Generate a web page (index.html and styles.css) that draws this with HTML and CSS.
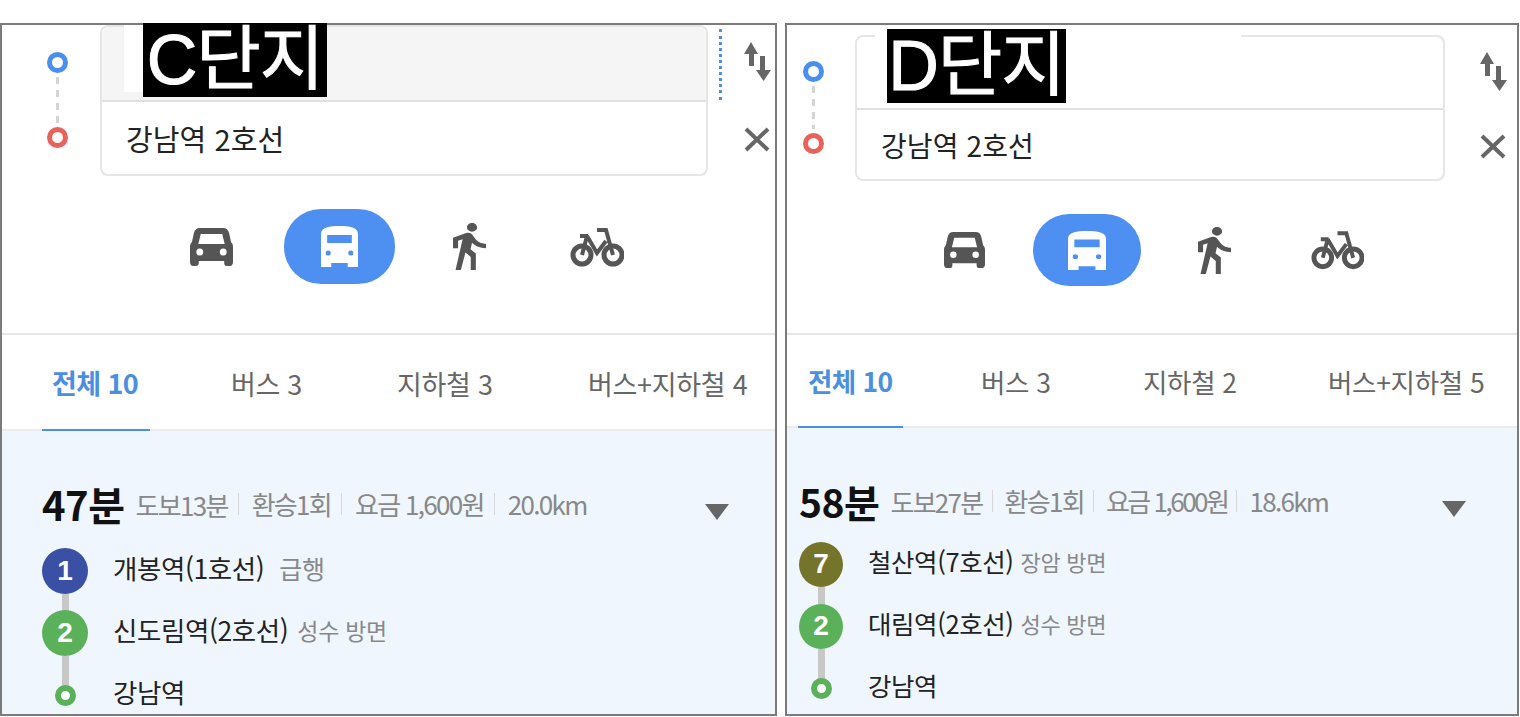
FILE: index.html
```html
<!DOCTYPE html>
<html lang="ko">
<head>
  <meta charset="UTF-8" />
  <meta name="viewport" content="width=device-width, initial-scale=1.0" />
  <title>길찾기 비교</title>
  <link rel="stylesheet" href="styles.css">
</head>
<body>
  <svg class="sprites" aria-hidden="true">
    <symbol id="icon-car" viewBox="0 0 44 38" preserveAspectRatio="none">
      <path fill-rule="evenodd" d="M10 0h24c3 0 5 1.500 6 5l2 9c1.500 1.500 2 3 2 5v15c0 2-1 4-3 4h-3c-2 0-3-1-3-3v-2H9v2c0 2-1 3-3 3H3c-2 0-3-2-3-4V19c0-2 .5-3.500 2-5l2-9C5 1.500 7 0 10 0zM11 6L8.500 16h27L33 6zM10 20.500a3.500 3.500 0 1 0 0 7 3.500 3.500 0 0 0 0-7zM34 20.500a3.500 3.500 0 1 0 0 7 3.500 3.500 0 0 0 0-7z"/>
    </symbol>
    <symbol id="icon-bus" viewBox="0 0 36 41" preserveAspectRatio="none">
      <path fill-rule="evenodd" d="M18 0c10 0 18 1.500 18 8v33H26v-4H10v4H0V8C0 1.500 8 0 18 0zM6 9v8h24V9zM7 24.500a2.500 2.500 0 1 0 0 5 2.500 2.500 0 0 0 0-5zM29 24.500a2.500 2.500 0 1 0 0 5 2.500 2.500 0 0 0 0-5z"/>
    </symbol>
    <symbol id="icon-walk" viewBox="6 1.500 13 21.500" preserveAspectRatio="none">
      <path d="M13.500 5.500c1.100 0 2-.9 2-2s-.9-2-2-2-2 .9-2 2 .9 2 2 2zM9.800 8.900L7 23h2.100l1.800-8 2.100 2v6h2v-7.500l-2.100-2 .6-3C14.800 12 16.800 13 19 13v-2c-1.900 0-3.500-1-4.300-2.400l-1-1.600c-.4-.6-1-1-1.700-1-.3 0-.5.100-.8.100L6 8.300V13h2V9.600l1.800-.7z"/>
    </symbol>
    <symbol id="icon-bike" viewBox="0 0 54 40">
      <g fill="none" stroke="#555" stroke-width="5">
        <circle cx="12" cy="28" r="9"/>
        <circle cx="43" cy="28" r="9"/>
        <path stroke-width="4" d="M27 3h9l7 25M10 9h8M17 9l-5 19M17 9l10 17 9-12"/>
      </g>
    </symbol>
    <symbol id="icon-swap" viewBox="0 0 28 39" preserveAspectRatio="none">
      <path d="M7 0l7 12H10v12H5V12H0zM16 14h5v14h6l-7.500 11L12 28h4z"/>
    </symbol>
    <symbol id="icon-close" viewBox="0 0 26 25" preserveAspectRatio="none">
      <path d="M2 2l22 21M24 2L2 23" fill="none" stroke="#666" stroke-width="4"/>
    </symbol>
  </svg>

  <main class="compare">
    <section class="panel panel-c">
      <div class="top">
        <div class="form">
          <div class="markers">
            <span class="dot dot-start"></span>
            <span class="dash"></span>
            <span class="dot dot-end"></span>
          </div>
          <div class="box">
            <div class="field field-active"></div>
            <div class="field">강남역 2호선</div>
            <span class="patch"></span>
            <span class="cover">C단지</span>
          </div>
          <span class="focus-line"></span>
          <div class="actions">
            <svg class="icon-swap"><use href="#icon-swap"/></svg>
            <svg class="icon-close"><use href="#icon-close"/></svg>
          </div>
        </div>
        <div class="modes">
          <div class="mode"><svg class="icon-car"><use href="#icon-car"/></svg></div>
          <div class="mode mode-active"><svg class="icon-bus"><use href="#icon-bus"/></svg></div>
          <div class="mode"><svg class="icon-walk"><use href="#icon-walk"/></svg></div>
          <div class="mode mode-bike"><svg class="icon-bike"><use href="#icon-bike"/></svg></div>
        </div>
      </div>
      <nav class="tabs">
        <a class="tab tab-active">전체 10</a>
        <a class="tab">버스 3</a>
        <a class="tab">지하철 3</a>
        <a class="tab">버스+지하철 4</a>
      </nav>
      <div class="results">
        <div class="summary">
          <strong class="time">47분</strong>
          <span class="meta">도보13분</span>
          <span class="meta">환승1회</span>
          <span class="meta">요금 1,600원</span>
          <span class="meta">20.0km</span>
          <span class="caret"></span>
        </div>
        <ul class="steps">
          <li class="step">
            <span class="badge line-1">1</span>
            <span class="name">개봉역(1호선)</span>
            <span class="sub sub-wide">급행</span>
          </li>
          <li class="step">
            <span class="badge line-2">2</span>
            <span class="name">신도림역(2호선)</span>
            <span class="sub">성수 방면</span>
          </li>
          <li class="step">
            <span class="badge-end"><span class="end-dot"></span></span>
            <span class="name">강남역</span>
          </li>
        </ul>
      </div>
    </section>

    <section class="panel panel-d">
      <div class="top">
        <div class="form">
          <div class="markers">
            <span class="dot dot-start"></span>
            <span class="dash"></span>
            <span class="dot dot-end"></span>
          </div>
          <div class="box">
            <div class="field"></div>
            <div class="field">강남역 2호선</div>
            <span class="patch"></span>
            <span class="cover">D단지</span>
          </div>
          <div class="actions">
            <svg class="icon-swap"><use href="#icon-swap"/></svg>
            <svg class="icon-close"><use href="#icon-close"/></svg>
          </div>
        </div>
        <div class="modes">
          <div class="mode"><svg class="icon-car"><use href="#icon-car"/></svg></div>
          <div class="mode mode-active"><svg class="icon-bus"><use href="#icon-bus"/></svg></div>
          <div class="mode"><svg class="icon-walk"><use href="#icon-walk"/></svg></div>
          <div class="mode mode-bike"><svg class="icon-bike"><use href="#icon-bike"/></svg></div>
        </div>
      </div>
      <nav class="tabs">
        <a class="tab tab-active">전체 10</a>
        <a class="tab">버스 3</a>
        <a class="tab">지하철 2</a>
        <a class="tab">버스+지하철 5</a>
      </nav>
      <div class="results">
        <div class="summary">
          <strong class="time">58분</strong>
          <span class="meta">도보27분</span>
          <span class="meta">환승1회</span>
          <span class="meta meta-fare">요금 1,600원</span>
          <span class="meta">18.6km</span>
          <span class="caret"></span>
        </div>
        <ul class="steps">
          <li class="step">
            <span class="badge line-7">7</span>
            <span class="name">철산역(7호선)</span>
            <span class="sub">장암 방면</span>
          </li>
          <li class="step">
            <span class="badge line-2">2</span>
            <span class="name">대림역(2호선)</span>
            <span class="sub">성수 방면</span>
          </li>
          <li class="step">
            <span class="badge-end"><span class="end-dot"></span></span>
            <span class="name">강남역</span>
          </li>
        </ul>
      </div>
    </section>
  </main>
</body>
</html>
```

FILE: styles.css
```css
body {
  margin: 0;
  background-color: #fff;
  color: #222;
  font-family: "Noto Sans CJK KR", "Noto Sans", sans-serif;
  overflow: hidden;
}

.sprites {
  display: none;
}

.compare {
  display: flex;
  gap: 8px;
  padding-top: 23px;
}

.panel {
  position: relative;
  z-index: 0;
  box-sizing: border-box;
  height: 693px;
  border: 2px solid #7b7b7b;
  display: flex;
  flex-direction: column;
}

.panel-c {
  width: 777px;
}

.panel-d {
  width: 734px;
}

/* search form + travel modes */
.top {
  flex: none;
  height: 308px;
  border-bottom: 2px solid #e6e6e6;
}

.form {
  display: flex;
  align-items: flex-start;
}

.panel-c .form {
  padding-left: 44px;
}

.panel-d .form {
  padding: 10px 0 0 15px;
}

.markers {
  width: 22px;
  margin-right: 32px;
  display: flex;
  flex-direction: column;
  align-items: center;
  padding-top: 27px;
}

.panel-d .markers {
  margin-right: 31px;
  padding-top: 26px;
}

.dot {
  box-sizing: border-box;
  width: 21px;
  height: 21px;
  border: 5px solid #4a8ff0;
  border-radius: 50%;
}

.dot-end {
  border-color: #e8625c;
}

.dash {
  width: 3px;
  height: 46px;
  margin: 4px 0;
  background: repeating-linear-gradient(#d4d4d4 0 7px, transparent 7px 13px);
}

.panel-d .dash {
  height: 43px;
}

.box {
  position: relative;
  box-sizing: border-box;
  display: flex;
  flex-direction: column;
  border: 2px solid #e6e6e6;
  border-radius: 8px;
  background-color: #fff;
}

.panel-c .box {
  width: 608px;
  height: 151px;
}

.panel-d .box {
  width: 590px;
  height: 146px;
}

.field {
  box-sizing: border-box;
  flex: 1;
  display: flex;
  align-items: center;
  padding-left: 24px;
  font-size: 29px;
  letter-spacing: 0.1px;
  color: #222;
}

.panel-d .field {
  font-size: 28px;
}

.field:first-child {
  flex: none;
}

.panel-c .field:first-child {
  height: 73px;
}

.panel-d .field:first-child {
  height: 71px;
}

.field + .field {
  border-top: 2px solid #e0e0e0;
}

.field-active {
  background-color: #f5f5f5;
  border-radius: 6px 6px 0 0;
}

.patch {
  position: absolute;
  background-color: #fff;
}

.panel-c .patch {
  top: -2px;
  left: 22px;
  width: 19px;
  height: 67px;
}

.panel-d .patch {
  top: -4px;
  left: 18px;
  width: 366px;
  height: 6px;
}

.cover {
  position: absolute;
  display: flex;
  align-items: center;
  justify-content: center;
  height: 74px;
  background-color: #000;
  color: #fff;
  font-family: "Liberation Sans", "Noto Sans CJK KR", sans-serif;
  font-size: 70px;
  line-height: 1;
  letter-spacing: -1px;
  -webkit-text-stroke: 1px #fff;
}

.panel-c .cover {
  top: -4px;
  left: 41px;
  width: 184px;
}

.panel-d .cover {
  top: -8px;
  left: 30px;
  width: 179px;
}

.focus-line {
  width: 0;
  height: 71px;
  margin: 4px 0 0 11px;
  border-left: 3px dotted #4a8ff0;
}

.actions {
  display: flex;
  flex-direction: column;
  fill: #666;
}

.panel-c .actions {
  margin-left: 22px;
  padding-top: 17px;
}

.panel-d .actions {
  margin-left: 35px;
  padding-top: 17px;
}

.actions svg {
  display: block;
}

.icon-swap {
  width: 28px;
  height: 39px;
}

.icon-close {
  width: 26px;
  height: 25px;
  margin-top: 46px;
}

.panel-d .icon-close {
  margin-top: 43px;
}

.modes {
  display: flex;
  align-items: center;
  fill: #555;
}

.panel-c .modes {
  padding: 33px 0 0 145px;
}

.panel-d .modes {
  padding: 33px 0 0 115px;
}

.mode {
  display: flex;
  align-items: center;
  justify-content: center;
  width: 129px;
}

.panel-d .mode {
  width: 125px;
}

.mode svg {
  display: block;
}

.mode-bike {
  margin-left: -2px;
}

.mode-active {
  position: relative;
  z-index: 0;
  height: 75px;
  fill: #fff;
  margin-left: -1px;
  margin-right: 1px;
}

.panel-d .mode-active {
  height: 72px;
  margin-left: -3px;
  margin-right: 3px;
}

.mode-active::before {
  content: "";
  position: absolute;
  z-index: -1;
  top: 0;
  bottom: 0;
  left: 9px;
  right: 9px;
  border-radius: 37px;
  background-color: #4d90f2;
}

.panel-d .mode-active::before {
  left: 9px;
  right: 8px;
}

.icon-car {
  width: 43px;
  height: 38px;
}

.icon-bus {
  width: 37px;
  height: 41px;
}

.icon-walk {
  width: 33px;
  height: 47px;
}

.icon-bike {
  width: 54px;
  height: 40px;
}

.panel-d .icon-car {
  width: 41px;
  height: 36px;
}

.panel-d .icon-bus {
  width: 38px;
  height: 39px;
}

.panel-d .icon-bike {
  width: 53px;
}

/* tabs */
.tabs {
  flex: none;
  display: grid;
  justify-items: start;
  box-sizing: border-box;
  height: 96px;
  border-bottom: 2px solid #ececec;
  font-size: 27px;
  letter-spacing: -0.3px;
  color: #666;
}

.panel-c .tabs {
  grid-template-columns: 179px 166px 191px auto;
  padding-left: 40px;
}

.panel-d .tabs {
  grid-template-columns: 173px 162px 185px auto;
  padding-left: 11px;
  height: 93px;
  font-size: 26.500px;
}

.tab {
  display: flex;
  align-items: center;
  box-sizing: border-box;
  height: 96px;
  padding: 0 10px;
  white-space: nowrap;
}

.panel-d .tab {
  height: 93px;
}

.tab-active {
  color: #4a8fe0;
  font-weight: 700;
  letter-spacing: -0.6px;
  border-bottom: 2px solid #4a8fe0;
}

.panel-c .tab-active {
  width: 108px;
}

.panel-d .tab-active {
  width: 105px;
}

/* route results */
.results {
  position: relative;
  z-index: 0;
  flex: 1;
  min-height: 0;
  background-color: #eff6fd;
}

.panel-c .results {
  padding: 53px 0 0 40px;
}

.panel-d .results {
  padding: 53px 0 0 12px;
}

.summary {
  display: flex;
  align-items: center;
  height: 40px;
}

.time {
  font-size: 40px;
  font-weight: 700;
  color: #111;
  letter-spacing: -0.5px;
  margin-right: 11px;
}

.panel-d .time {
  font-size: 39px;
}

.meta {
  font-size: 26px;
  letter-spacing: -1.700px;
  color: #888;
  white-space: nowrap;
}

.meta-fare {
  letter-spacing: -2.500px;
}

.meta + .meta {
  margin-left: 10px;
  padding-left: 13px;
  border-left: 1px solid #d8d8d8;
  line-height: 22px;
}

.panel-d .meta + .meta {
  margin-left: 9px;
  padding-left: 12px;
}

.caret {
  width: 0;
  height: 0;
  margin-left: auto;
  border-style: solid;
  border-width: 16px 12.500px 0;
  border-color: #666 transparent transparent;
  position: relative;
  top: 8px;
}

.panel-c .caret {
  margin-right: 46px;
}

.panel-d .caret {
  margin-right: 51px;
}

.steps {
  list-style: none;
  margin: 16px 0 0;
  padding: 0;
}

.panel-d .steps {
  margin-top: 12px;
}

.step {
  display: flex;
  align-items: center;
  height: 62px;
}

.badge,
.badge-end {
  position: relative;
  flex: none;
  width: 46px;
  height: 46px;
  margin-right: 25px;
  display: flex;
  align-items: center;
  justify-content: center;
  border-radius: 50%;
  color: #fff;
  font-family: "Liberation Sans", sans-serif;
  font-size: 28px;
  font-weight: 700;
}

.panel-d .badge,
.panel-d .badge-end {
  width: 44px;
  height: 45px;
}

.badge::after {
  content: "";
  position: absolute;
  z-index: -1;
  top: 100%;
  left: 50%;
  width: 7px;
  height: 34px;
  margin-left: -3px;
  background-color: #c8c8c8;
}

.line-1 {
  background-color: #3a50a5;
}

.line-2 {
  background-color: #5bb05a;
}

.line-7 {
  background-color: #74752b;
}

.end-dot {
  position: relative;
  box-sizing: border-box;
  width: 21px;
  height: 21px;
  border: 6px solid #5bb05a;
  border-radius: 50%;
  background-color: #fff;
}

.name {
  padding-bottom: 7px;
  font-size: 26.500px;
  letter-spacing: -0.4px;
  color: #222;
  white-space: nowrap;
}

.panel-d .name {
  font-size: 25.500px;
}

.sub {
  margin-left: 9px;
  padding-bottom: 6px;
  font-size: 23px;
  letter-spacing: -0.3px;
  color: #888;
}

.panel-d .sub {
  margin-left: 7px;
  font-size: 22px;
}

.sub-wide {
  margin-left: 15px;
  font-size: 25px;
}
```
